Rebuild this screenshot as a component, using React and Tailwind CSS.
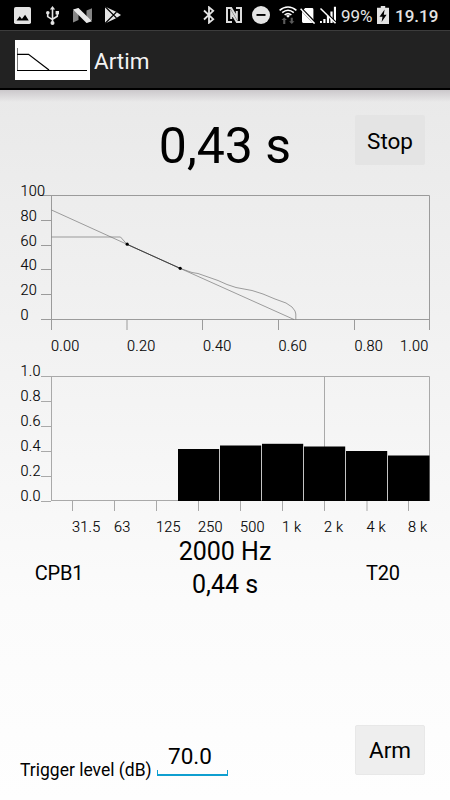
const decayTicksY = [
  { label: "100", y: 195.5 },
  { label: "80", y: 220.5 },
  { label: "60", y: 245.5 },
  { label: "40", y: 269.5 },
  { label: "20", y: 294.5 },
  { label: "0", y: 319.5 },
];

const decayTicksX = [
  { label: "0.00", x: 51.5, text: 51 },
  { label: "0.20", x: 127, text: 127 },
  { label: "0.40", x: 202.5, text: 203 },
  { label: "0.60", x: 278.5, text: 278.5 },
  { label: "0.80", x: 354.5, text: 354.5 },
  { label: "1.00", x: 429.5, text: 400 },
];

const bandTicksY = [
  { label: "1.0", y: 376.5 },
  { label: "0.8", y: 401.5 },
  { label: "0.6", y: 426.5 },
  { label: "0.4", y: 451.5 },
  { label: "0.2", y: 476.5 },
  { label: "0.0", y: 501.5 },
];

const bands = [
  { label: "31.5", x: 72.5 },
  { label: "63", x: 114.5 },
  { label: "125", x: 156.5 },
  { label: "250", x: 198.5, top: 449 },
  { label: "500", x: 240.5, top: 445.5 },
  { label: "1 k", x: 282.5, top: 443.8 },
  { label: "2 k", x: 324.5, top: 446.5 },
  { label: "4 k", x: 367, top: 451 },
  { label: "8 k", x: 408.5, top: 455.5 },
];

function StatusBar() {
  return (
    <div className="flex h-[30px] items-center bg-black text-[17px] leading-none text-[#e4e4e4]">
      <svg className="ml-[14px] h-[17px] w-[17px]" viewBox="0 0 17 17">
        <rect width="17" height="17" rx="1.8" fill="#e4e4e4" />
        <path d="M2.5 13.5l3.2-4.3 2.2 2.7 3.2-4.1 3.7 5.7z" fill="#000" />
      </svg>
      <svg className="ml-[15px] h-[19px] w-[13px]" viewBox="0 0 13 19" fill="none" stroke="#e4e4e4" strokeWidth="1.6">
        <path d="M6.5 3v13M1.7 7v3.6l4.8 3M11.3 7v3.2l-4.8 3" />
        <path d="M6.5 0l2.6 3.6H3.9z" fill="#e4e4e4" stroke="none" />
        <circle cx="6.5" cy="17" r="2" fill="#e4e4e4" stroke="none" />
        <circle cx="1.8" cy="6.8" r="1.8" fill="#e4e4e4" stroke="none" />
        <rect x="9.6" y="5" width="3.4" height="3.4" fill="#e4e4e4" stroke="none" />
      </svg>
      <svg className="ml-[14px] h-[15px] w-[19px]" viewBox="0 0 19 15">
        <path d="M0 2.5L5.5 0v12L0 14.5zM13.5 2.5L19 .2V12l-5.5 3z" fill="#858585" />
        <path d="M0 1.5L5.5 0 19 13.3 13.5 15z" fill="#e8e8e8" />
      </svg>
      <svg className="ml-3 h-[18px] w-[17px]" viewBox="0 0 17 18">
        <path d="M1 .5l10.5 5L17 9l-5.5 3.5L1 17.5z" fill="#e4e4e4" />
        <path d="M1 .5L12.5 12M1 17.5L12.5 6" stroke="#000" strokeWidth="1.1" />
      </svg>
      <svg className="ml-[82px] h-[18px] w-3" viewBox="0 0 12 18" fill="none" stroke="#e4e4e4" strokeWidth="1.8">
        <path d="M1 4.5l9.2 8.7L6 16.7V1.3l4.2 3.5L1 13.5" />
      </svg>
      <svg className="ml-[11px] h-4 w-4" viewBox="0 0 16 16" fill="none" stroke="#dcdcdc" strokeWidth="2">
        <path d="M6 15H1V1h4.2l5.6 9.5V4M10 1h5v14h-4.2L5.2 5.5V12" />
      </svg>
      <svg className="ml-[10px] h-[18px] w-[18px]" viewBox="0 0 18 18">
        <circle cx="9" cy="9" r="9" fill="#e4e4e4" />
        <rect x="4.5" y="8" width="9" height="1.9" fill="#000" />
      </svg>
      <svg className="ml-[9px] h-[18px] w-[18px]" viewBox="0 0 18 18" fill="none" stroke="#fff" strokeWidth="1.6">
        <path d="M.6 4.3c5-4.4 11.8-4.4 16.8 0M3.2 6.7c3.6-3 8-3 11.6 0M5.6 9c2.2-1.8 4.6-1.8 6.8 0" />
        <path d="M7 9.7q2-1.2 4 0l-2 2.1z" fill="#fff" stroke="none" />
        <path d="M5.2 11.4l2.7 2.7H6.3V18H4.2v-3.9H2.6zM12.8 18l-2.7-2.7h1.6v-3.6h2.1v3.6h1.6z" fill="#5b5b5b" stroke="none" />
      </svg>
      <svg className="ml-[3px] h-[17px] w-4" viewBox="0 0 16 17">
        <path d="M5.2 1H12q1.4 0 1.4 1.4v14L2 4.2zM2 4.8l10.6 11.3H3.3Q2 16 2 14.6z" fill="#fff" />
        <path d="M1.6 1.6L15.5 16" stroke="#000" strokeWidth="2" />
        <path d="M.6 1.8L14.6 16.6" stroke="#fff" strokeWidth="1.4" />
      </svg>
      <svg className="ml-1 h-[18px] w-4" viewBox="0 0 16 18" fill="none" stroke="#fff">
        <path d="M.8 15v2M4.4 13v4M8 9.5V17M11.5 5.5V17M15 .8V17" strokeWidth="2.2" />
        <path d="M1.5 1.8L16 16.3" stroke="#000" strokeWidth="1.6" />
        <path d="M.5 2.5L15.5 17.3" strokeWidth="1.5" />
      </svg>
      <span className="ml-[5px] w-[32px] pt-[3px]">99%</span>
      <svg className="ml-[4px] h-[18px] w-3" viewBox="0 0 12 18">
        <path d="M3.8 0h4.4v1.8H12V18H0V1.8h3.8z" fill="#e4e4e4" />
        <path d="M7.6 3.6L2.5 10.7h3L4.6 16l5-7.2H6.8z" fill="#000" />
      </svg>
      <span className="ml-[6px] pt-[3px] font-medium">19.19</span>
    </div>
  );
}

function TitleBar() {
  return (
    <header className="flex h-[60px] items-center border-t border-b-2 border-t-[#3c3c3c] border-b-black bg-[#222] pl-[15px]">
      <svg className="h-10 w-[75px] bg-white" viewBox="0 0 75 40" fill="none" stroke="#000">
        <path d="M2.5 8v22" stroke="#777" />
        <path d="M2 14.3h11.5L34 30" strokeWidth="1.2" />
        <path d="M2 30.5h70" />
      </svg>
      <h1 className="ml-1 pt-[3px] text-[22.5px] leading-none text-[#f3f3f3]">Artim</h1>
    </header>
  );
}

function DecayChart() {
  return (
    <svg className="block h-[180px] w-[450px]" viewBox="0 180 450 180">
      <g fill="none" stroke="#9b9b9b">
        <path d="M41 195.5H429.5V330M51.5 195.5V330M41 319.5H429.5" />
        {decayTicksY.map((t) => (
          <path key={t.label} d={`M41 ${t.y}H51`} />
        ))}
        {decayTicksX.map((t) => (
          <path key={t.label} d={`M${t.x} 320V330`} />
        ))}
      </g>
      <g fill="none" stroke="#777" strokeWidth="0.7">
        <path d="M51.5 210L127 244.3 180 268.3 294 319.5" />
        <path d="M51.5 237H120.5L127 244.3 180 268.3 192 272.5 198 273.5 208 277 218 280.5 227 284.5 236 287.5 252 290.5 263 294 275 299 286 303 292 307 295 311 295.8 314V319.5" />
      </g>
      <path d="M127 244.3L180 268.3" stroke="#222" strokeWidth="0.7" />
      <circle cx="127.2" cy="244.2" r="1.6" />
      <circle cx="180.2" cy="268.3" r="1.6" />
      <g className="text-[14.5px] font-light tracking-[0.2px]" stroke="#000" strokeWidth="0.15">
        {decayTicksY.map((t) => (
          <text key={t.label} x="20.5" y={t.y}>{t.label}</text>
        ))}
        {decayTicksX.map((t) => (
          <text key={t.label} x={t.text} y="351">{t.label}</text>
        ))}
      </g>
    </svg>
  );
}

function BandChart() {
  return (
    <svg className="block h-[176px] w-[450px]" viewBox="0 360 450 176">
      <g fill="none" stroke="#a9a9a9">
        <path d="M41 376.5H429.5V501M51.5 376.5V501M51 500.5H429.5M324.5 376V447" />
        {bandTicksY.map((t) => (
          <path key={t.label} d={`M41 ${t.y}H51`} />
        ))}
        {bands.map((b) => (
          <path key={b.label} d={`M${b.x} 501V511`} />
        ))}
      </g>
      {bands.filter((b) => b.top).map((b, i) => (
        <rect key={b.label} x={178 + i * 42} y={b.top} width={i === 5 ? 41.5 : 41.2} height={501 - b.top} />
      ))}
      <g className="text-[14.5px] font-light tracking-[0.2px]" stroke="#000" strokeWidth="0.15">
        {bandTicksY.map((t) => (
          <text key={t.label} x="20.5" y={t.y - 0.3}>{t.label}</text>
        ))}
        {bands.map((b) => (
          <text key={b.label} x={b.x - 0.5} y="532">{b.label}</text>
        ))}
      </g>
    </svg>
  );
}

export default function App() {
  return (
    <div className="flex h-[800px] w-[450px] flex-col overflow-hidden bg-white font-['Roboto',sans-serif] text-black">
      <StatusBar />
      <TitleBar />
      <main className="flex flex-1 flex-col bg-[linear-gradient(#e9e9e9,#f3f3f3_40%,#fbfbfb_72%,#fefefe)]">
        <div className="h-3 bg-linear-to-b from-[#cbc8cb] to-transparent" />
        <div className="grid h-[78px] grid-cols-[95px_260px_70px] pt-[13px]">
          <div className="col-start-2 pt-1 text-center text-[50px] leading-[54px]">0,43 s</div>
          <button className="h-[50px] rounded-[2px] bg-[#e4e4e4] pt-[3px] text-[22.5px] leading-none">Stop</button>
        </div>
        <DecayChart />
        <BandChart />
        <div className="-mt-px grid grid-cols-3 text-center">
          <div className="pt-[23px] pr-8 text-[20px] leading-[30px] tracking-[-0.2px]">CPB1</div>
          <div className="text-[25px] leading-[33px]">
            <p>2000 Hz</p>
            <p>0,44 s</p>
          </div>
          <div className="pt-[23px] pl-4 text-[20px] leading-[30px] tracking-[-0.2px]">T20</div>
        </div>
        <div className="mt-auto mb-[24px] flex h-[51px] items-end pr-[25px] pl-5">
          <label htmlFor="trigger" className="text-[17.5px] leading-[11px] whitespace-nowrap">
            Trigger level (dB)
          </label>
          <div className="ml-auto flex w-[71px] flex-col">
            <input
              id="trigger"
              defaultValue="70.0"
              className="h-7 w-full pr-1 pl-[11px] text-[22.5px] leading-7 outline-none"
            />
            <div className="h-[6px] border-x border-b-2 border-[#0f9fd0]" />
          </div>
          <button className="mb-px ml-[127px] h-[50px] w-[70px] rounded-[2px] border border-[#e8e8e8] bg-[#eee] text-[22.5px] leading-none">
            Arm
          </button>
        </div>
      </main>
    </div>
  );
}
